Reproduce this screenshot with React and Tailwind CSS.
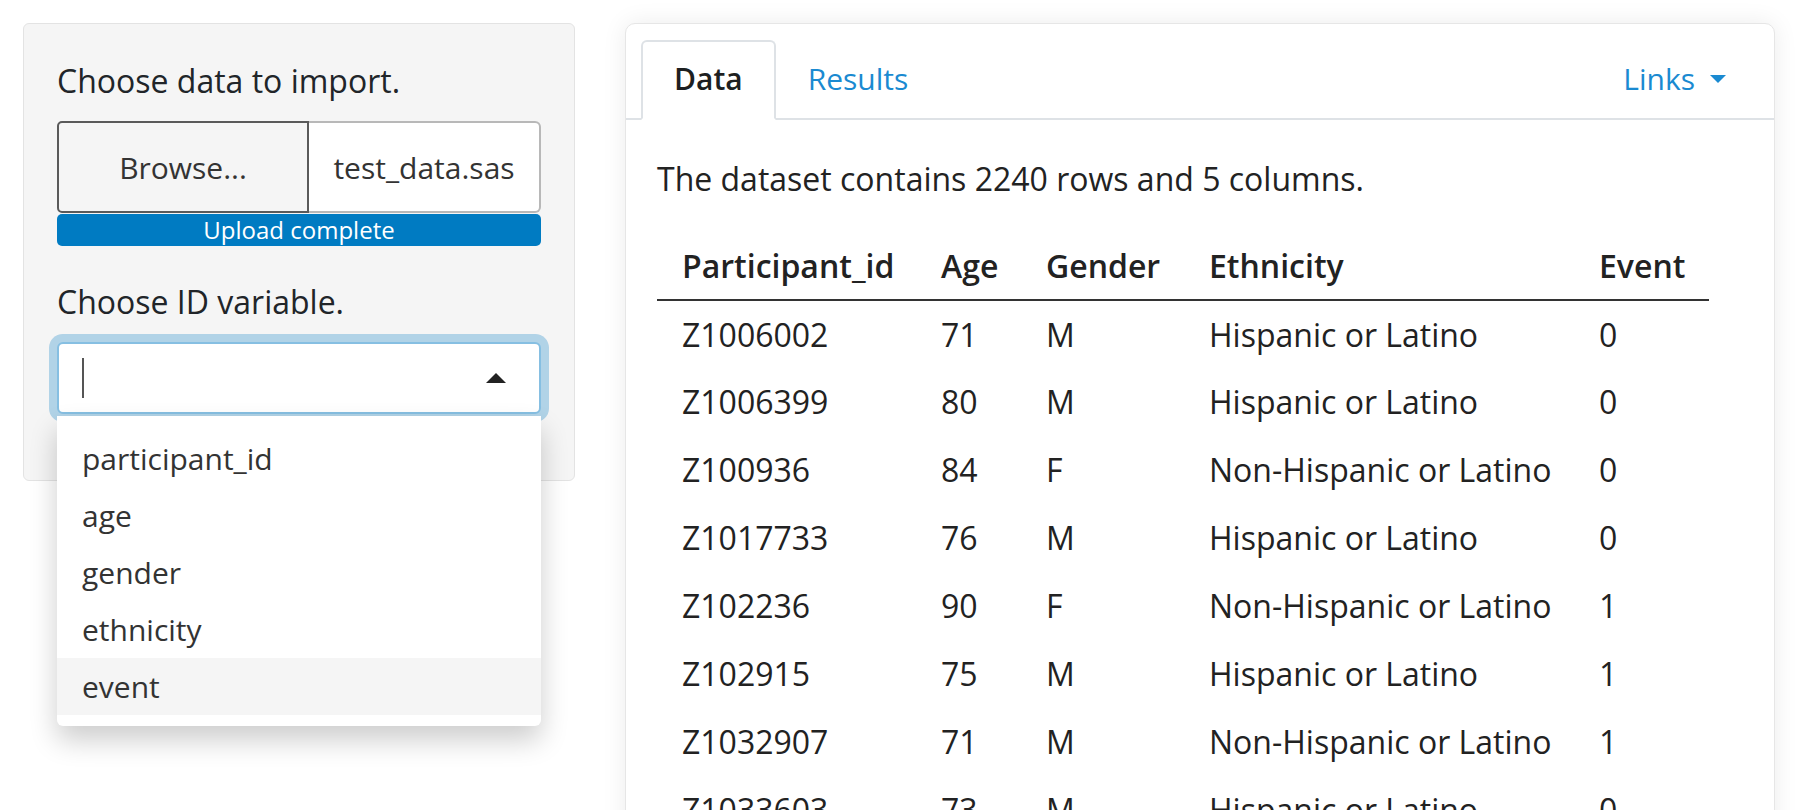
import React from "react";

const rows = [
  ["Z1006002", "71", "M", "Hispanic or Latino", "0"],
  ["Z1006399", "80", "M", "Hispanic or Latino", "0"],
  ["Z100936", "84", "F", "Non-Hispanic or Latino", "0"],
  ["Z1017733", "76", "M", "Hispanic or Latino", "0"],
  ["Z102236", "90", "F", "Non-Hispanic or Latino", "1"],
  ["Z102915", "75", "M", "Hispanic or Latino", "1"],
  ["Z1032907", "71", "M", "Non-Hispanic or Latino", "1"],
  ["Z1033603", "73", "M", "Hispanic or Latino", "0"],
];

const options = ["participant_id", "age", "gender", "ethnicity", "event"];

const Sidebar = () => (
  <aside className="w-[552px] shrink-0 bg-[#f5f5f5] border border-[#e3e3e3] rounded-[6px] p-[33px]">
    <label className="block text-[32px] leading-[48px] mb-4">Choose data to import.</label>
    <div className="flex h-[92px] text-[30px] text-[#333]">
      <div className="w-[252px] flex items-center justify-center border-2 border-[#5a5a5a] rounded-l-[5px]">
        Browse...
      </div>
      <div className="flex-1 flex items-center justify-center bg-white border-y-2 border-r-2 border-[#b8b8b8] rounded-r-[6px]">
        test_data.sas
      </div>
    </div>
    <div className="mt-[1px] h-[32px] rounded-[5px] bg-[#007bc2] text-white text-[24px] leading-[32px] text-center">
      Upload complete
    </div>

    <label className="block mt-8 mb-4 text-[32px] leading-[48px]">Choose ID variable.</label>
    <div className="relative mb-[33px]">
      <div className="h-[72px] bg-white border-2 border-[#86bfe2] rounded-[6px] shadow-[0_0_0_8px_rgba(0,123,194,0.28)] flex items-center pl-[23px] pr-[33px]">
        <span className="w-[2px] h-[40px] bg-[#555]" />
        <span className="ml-auto w-0 h-0 border-x-[10px] border-x-transparent border-b-[10px] border-b-[#222]" />
      </div>
      <div className="absolute left-0 right-0 top-full mt-[2px] z-10 bg-white rounded-b-[6px] shadow-[0_14px_28px_rgba(0,0,0,0.2)] pt-[14px] pb-[11px] text-[30px] text-[#333]">
        {options.map((o) => (
          <div
            key={o}
            className={`h-[57px] flex items-center px-[25px] ${o === "event" ? "bg-[#f5f5f5]" : ""}`}
          >
            {o}
          </div>
        ))}
      </div>
    </div>
  </aside>
);

const DataCard = () => (
  <main className="w-[1150px] shrink-0 h-[820px] bg-white border border-[#e6e6e6] rounded-[10px] shadow-[0_0_24px_rgba(0,0,0,0.08)] overflow-hidden">
    <div className="flex items-end px-[15px] pt-[16px] border-b-2 border-[#dee2e6] text-[30px]">
      <div className="-mb-[2px] h-[80px] px-[31px] pb-[3px] flex items-center bg-white border-2 border-[#dee2e6] border-b-white rounded-t-[6px] font-semibold text-[#1d1f21]">
        Data
      </div>
      <div className="-mb-[2px] h-[80px] px-[32px] pb-[3px] flex items-center text-[#1a8ad1]">Results</div>
      <div className="ml-auto -mb-[2px] h-[80px] pr-[33px] pb-[3px] flex items-center gap-[15px] text-[#1a8ad1]">
        Links
        <span className="w-0 h-0 border-x-[8px] border-x-transparent border-t-[8px] border-t-[#1a8ad1]" />
      </div>
    </div>

    <div className="px-[31px] pt-[35px] text-[32px] leading-[48px] text-[#222]">
      <p className="mb-[29px]">The dataset contains 2240 rows and 5 columns.</p>
      <table className="table-fixed w-[1052px] border-collapse">
        <thead>
          <tr className="border-b-2 border-[#333]">
            <th className="w-[258px] h-[68px] pl-[25px] text-left font-semibold">Participant_id</th>
            <th className="w-[106px] pl-[26px] text-left font-semibold">Age</th>
            <th className="w-[162px] pl-[25px] text-left font-semibold">Gender</th>
            <th className="w-[391px] pl-[26px] text-left font-semibold">Ethnicity</th>
            <th className="w-[135px] pl-[25px] text-left font-semibold">Event</th>
          </tr>
        </thead>
        <tbody>
          {rows.map((r) => (
            <tr key={r[0]} className="h-[68px]">
              {r.map((c, i) => (
                <td key={i} className={`whitespace-nowrap ${i === 1 || i === 3 ? "pl-[26px]" : "pl-[25px]"}`}>
                  {c}
                </td>
              ))}
            </tr>
          ))}
        </tbody>
      </table>
    </div>
  </main>
);

export default function App() {
  return (
    <div className="h-[810px] overflow-hidden bg-white flex items-start gap-[50px] pl-[23px] pt-[23px] font-['Open_Sans',sans-serif] text-[#212529]">
      <Sidebar />
      <DataCard />
    </div>
  );
}
